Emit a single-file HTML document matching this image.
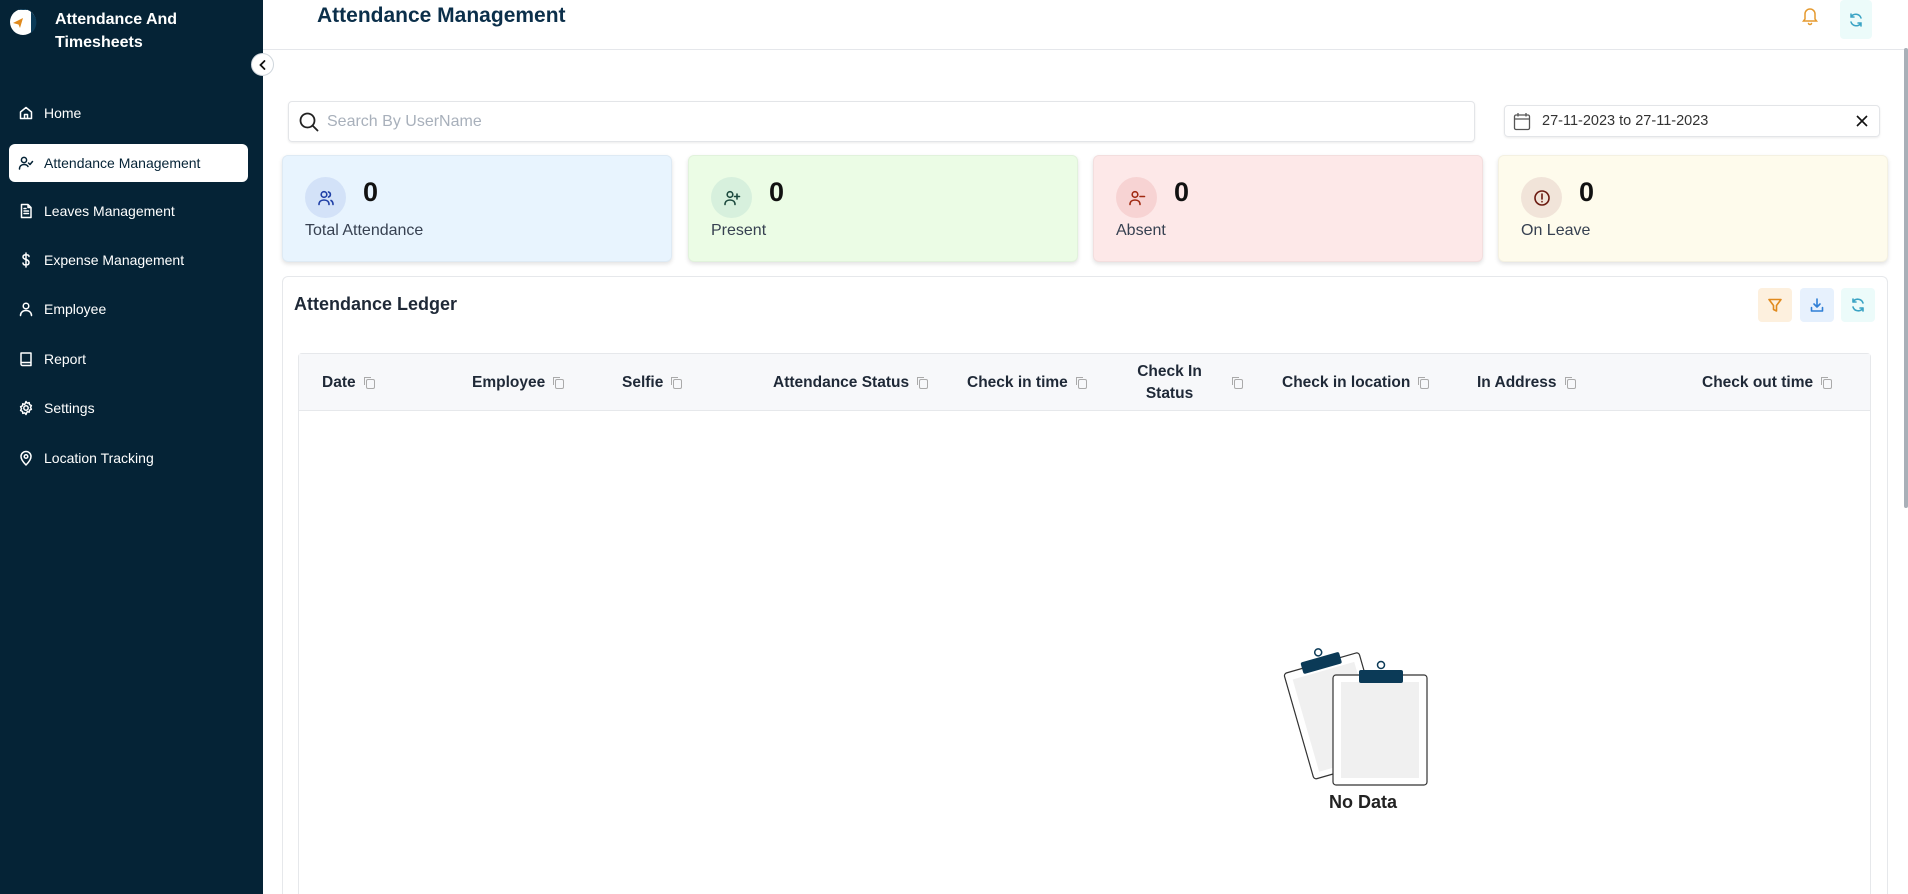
<!DOCTYPE html>
<html style="width:1908px;height:894px;overflow:hidden"><head><meta charset="utf-8">
<style>
*{box-sizing:border-box;margin:0;padding:0}
html,body{overflow:hidden}
body{width:1908px;height:894px;overflow:hidden;background:#fff;font-family:"Liberation Sans",sans-serif;position:relative;color:#1f2937}
.abs{position:absolute}
#side{left:0;top:0;width:263px;height:894px;background:#052336}
.nav{position:absolute;left:9px;width:239px;height:38px;color:#fff;font-size:14px;display:flex;align-items:center;padding-left:35px}
.nav svg{position:absolute;left:9px;top:11px;width:16px;height:16px;fill:none;stroke:#fff;stroke-width:1.5;stroke-linecap:round;stroke-linejoin:round}
.nav.act{background:#fff;color:#052336;border-radius:6px}
.nav.act svg{stroke:#052336}
.card{position:absolute;top:155px;height:107px;width:390px;border-radius:6px;box-shadow:0 2px 4px rgba(0,0,0,.12);border:1px solid rgba(0,0,0,.04)}
.card .ic{position:absolute;left:22px;top:21px;width:41px;height:41px;border-radius:50%;display:flex;align-items:center;justify-content:center}
.card .ic svg{width:18px;height:18px;fill:none;stroke-width:1.6;stroke-linecap:round;stroke-linejoin:round}
.card .n{position:absolute;left:80px;top:21px;font-size:27px;font-weight:600;color:#111}
.card .l{position:absolute;left:22px;top:66px;font-size:16px;color:#374151}
.th{position:absolute;top:0;height:57px;display:flex;align-items:center;font-size:15.5px;font-weight:700;color:#1f2937}
.cp{display:inline-block;width:9px;height:10px;border:1px solid #aaa;border-radius:2px;margin-left:10px;position:relative;top:1px}
.cp:after{content:"";position:absolute;left:-3px;top:-3px;width:6px;height:7px;border-left:1px solid #aaa;border-top:1px solid #aaa}
.btn{position:absolute;top:288px;width:34px;height:34px;border-radius:4px;display:flex;align-items:center;justify-content:center}
.btn svg{width:16px;height:16px;fill:none;stroke-width:1.6;stroke-linecap:round;stroke-linejoin:round}
</style></head><body>
<div id="side" class="abs">
  <svg class="abs" style="left:9px;top:6px" width="28" height="32" viewBox="0 0 28 32">
    <circle cx="14" cy="16" r="13" fill="#fff"/>
    <path d="M9 4 H20 a2 2 0 0 1 2 2 V27 a13 13 0 0 0 3 -18 A13 13 0 0 0 9 4z" fill="#0b3a57"/>
    <path d="M4 17 l10 -5 l-3 10 l-1.5 -3.5z" fill="#e08a1e"/>
  </svg>
  <div class="abs" style="left:55px;top:8px;color:#fff;font-weight:700;font-size:16px;line-height:23px">Attendance And<br>Timesheets</div>
  <div class="nav" style="top:94px"><svg viewBox="0 0 16 16"><path d="M2.5 7 L8 2.5 L13.5 7 V13.5 H2.5Z M6.5 13.5 V9.5 H9.5 V13.5"/></svg>Home</div>
  <div class="nav act" style="top:144px"><svg viewBox="0 0 16 16"><circle cx="6" cy="5" r="2.6"/><path d="M1.5 14 c0-3 2-4.5 4.5-4.5 s3.5 1 4 2 M10.5 8 l1.5 1.5 l2.5-3"/></svg>Attendance Management</div>
  <div class="nav" style="top:192px"><svg viewBox="0 0 16 16"><path d="M3.5 1.5 H10 L13 4.5 V14.5 H3.5Z M10 1.5 V4.5 H13 M6 8 H10.5 M6 10.5 H10.5 M6 5.5 H8"/></svg>Leaves Management</div>
  <div class="nav" style="top:241px"><svg viewBox="0 0 16 16"><path d="M8 1 V15 M11 4.5 C11 3.2 9.8 2.8 8 2.8 S5 3.5 5 5 S6.5 7 8 7.5 S11 8.5 11 10.5 S9.8 13 8 13 S5 12.5 5 11"/></svg>Expense Management</div>
  <div class="nav" style="top:290px"><svg viewBox="0 0 16 16"><circle cx="8" cy="5" r="2.8"/><path d="M2.5 14.5 c0-3.3 2.5-5 5.5-5 s5.5 1.7 5.5 5"/></svg>Employee</div>
  <div class="nav" style="top:340px"><svg viewBox="0 0 16 16"><path d="M3 2 H13 V14.5 H4.5 A1.5 1.5 0 0 1 3 13 Z M3 11.5 H13"/></svg>Report</div>
  <div class="nav" style="top:389px"><svg viewBox="0 0 16 16"><circle cx="8" cy="8" r="2.2"/><path d="M8 1.5 l1.2 1.7 2-.6 .3 2 1.9.9-.9 1.9 .9 1.9-1.9.9-.3 2-2-.6L8 14.5l-1.2-1.7-2 .6-.3-2-1.9-.9.9-1.9-.9-1.9 1.9-.9.3-2 2 .6z"/></svg>Settings</div>
  <div class="nav" style="top:439px"><svg viewBox="0 0 16 16"><path d="M8 15 C4 11 3 8.5 3 6.5 a5 5 0 0 1 10 0 C13 8.5 12 11 8 15Z"/><circle cx="8" cy="6.5" r="1.8"/></svg>Location Tracking</div>
</div>
<div class="abs" style="left:251px;top:53px;width:23px;height:23px;border-radius:50%;background:#fff;border:1px solid #cfd6dc;display:flex;align-items:center;justify-content:center">
  <svg width="12" height="12" viewBox="0 0 12 12"><path d="M7.5 2 L3.5 6 L7.5 10" stroke="#111" stroke-width="1.8" fill="none" stroke-linecap="round"/></svg>
</div>
<div class="abs" style="left:263px;top:0;width:1645px;height:50px;border-bottom:1px solid #e5e7eb"></div>
<div class="abs" style="left:317px;top:4px;font-size:21px;font-weight:600;color:#0b2f4a">Attendance Management</div>
<svg class="abs" style="left:1801px;top:6px" width="18" height="20" viewBox="0 0 18 20" fill="none" stroke="#e59a2f" stroke-width="1.5" stroke-linecap="round"><path d="M4 13 V8 a5 5 0 0 1 10 0 V13 L15.5 15 H2.5Z M7.5 17.5 a1.6 1.6 0 0 0 3 0"/></svg>
<div class="abs" style="left:1840px;top:0;width:32px;height:39px;background:#ecfbfa;border-radius:4px;display:flex;align-items:center;justify-content:center">
<svg width="16" height="16" viewBox="0 0 16 16" fill="none" stroke="#3aa3c4" stroke-width="1.5" stroke-linecap="round"><path d="M13 6 A5.5 5.5 0 0 0 3 5 M3 2 V5 H6 M3 10 A5.5 5.5 0 0 0 13 11 M13 14 V11 H10"/></svg></div>
<div class="abs" style="left:1904px;top:48px;width:4px;height:460px;background:#a9b0b8;border-radius:2px"></div>
<div class="abs" style="left:288px;top:101px;width:1187px;height:41px;border:1px solid #e3e5e8;border-radius:4px;box-shadow:0 1px 2px rgba(0,0,0,.08)">
  <svg class="abs" style="left:9px;top:9px" width="22" height="22" viewBox="0 0 22 22" fill="none" stroke="#222" stroke-width="1.8" stroke-linecap="round"><circle cx="9.5" cy="9.5" r="7"/><path d="M14.5 14.5 L19.5 19.5"/></svg>
  <div class="abs" style="left:38px;top:11px;font-size:16px;color:#a8b0bb">Search By UserName</div>
</div>
<div class="abs" style="left:1504px;top:105px;width:376px;height:32px;border:1px solid #e3e5e8;border-radius:4px;box-shadow:0 1px 2px rgba(0,0,0,.08)">
  <svg class="abs" style="left:8px;top:6px" width="18" height="19" viewBox="0 0 18 19" fill="none" stroke="#555" stroke-width="1.3"><rect x="1.5" y="3" width="15" height="14.5" rx="1.5"/><path d="M1.5 7 H16.5 M5 1 V4.5 M13 1 V4.5"/></svg>
  <div class="abs" style="left:37px;top:7px;font-size:14.5px;color:#333">27-11-2023 to 27-11-2023</div>
  <svg class="abs" style="left:351px;top:9px" width="12" height="12" viewBox="0 0 12 12" stroke="#111" stroke-width="1.6"><path d="M1 1 L11 11 M11 1 L1 11"/></svg>
</div>
<div class="card" style="left:282px;background:#e8f4fe"><div class="ic" style="background:#d3e2f8"><svg viewBox="0 0 18 18" stroke="#1f3fa6"><circle cx="7" cy="5.5" r="2.8"/><path d="M2 15.5 c0-3 2.2-4.5 5-4.5 s5 1.5 5 4.5 M11.5 3 a2.6 2.6 0 0 1 0 5 M14 11.5 c1.3.7 2 2 2 4"/></svg></div><div class="n">0</div><div class="l">Total Attendance</div></div>
<div class="card" style="left:688px;background:#ebfce5"><div class="ic" style="background:#d7f0dd"><svg viewBox="0 0 18 18" stroke="#1c4a3e"><circle cx="7" cy="5.5" r="2.8"/><path d="M2 15.5 c0-3 2.2-4.5 5-4.5 s5 1.5 5 4.5 M14 5 V10 M11.5 7.5 H16.5"/></svg></div><div class="n">0</div><div class="l">Present</div></div>
<div class="card" style="left:1093px;background:#fde8e8"><div class="ic" style="background:#f7d3d3"><svg viewBox="0 0 18 18" stroke="#a02a12"><circle cx="7" cy="5.5" r="2.8"/><path d="M2 15.5 c0-3 2.2-4.5 5-4.5 s5 1.5 5 4.5 M12 7.5 H16.5"/></svg></div><div class="n">0</div><div class="l">Absent</div></div>
<div class="card" style="left:1498px;background:#fefbec"><div class="ic" style="background:#f1e4d9"><svg viewBox="0 0 18 18" stroke="#6b1a10"><circle cx="9" cy="9" r="7"/><path d="M9 5 V10 M9 12.5 V12.8"/></svg></div><div class="n">0</div><div class="l">On Leave</div></div>
<div class="abs" style="left:282px;top:276px;width:1606px;height:618px;border:1px solid #e6e8eb;border-bottom:none;border-radius:6px 6px 0 0"></div>
<div class="abs" style="left:294px;top:294px;font-size:18px;font-weight:700;color:#1f2937">Attendance Ledger</div>
<div class="btn" style="left:1758px;background:#fdf0de"><svg viewBox="0 0 16 16" stroke="#e08a1e"><path d="M2 2.5 H14 L9.5 8.5 V14 L6.5 12.5 V8.5Z"/></svg></div>
<div class="btn" style="left:1800px;background:#e7f1fd"><svg viewBox="0 0 16 16" stroke="#2f7fd6"><path d="M8 2 V10 M5 7 L8 10 L11 7 M2.5 10.5 V14 H13.5 V10.5"/></svg></div>
<div class="btn" style="left:1841px;background:#ecfbfa"><svg viewBox="0 0 16 16" stroke="#3aa3c4"><path d="M13 6 A5.5 5.5 0 0 0 3 5 M3 2 V5 H6 M3 10 A5.5 5.5 0 0 0 13 11 M13 14 V11 H10"/></svg></div>
<div class="abs" style="left:298px;top:353px;width:1573px;height:541px;border:1px solid #e6e8eb;border-bottom:none;border-radius:4px 4px 0 0">
  <div class="abs" style="left:0;top:0;width:1571px;height:57px;background:#f7f8fa;border-bottom:1px solid #e6e8eb"></div>
  <div class="th" style="left:23px">Date<span class="cp"></span></div>
  <div class="th" style="left:173px">Employee<span class="cp"></span></div>
  <div class="th" style="left:323px">Selfie<span class="cp"></span></div>
  <div class="th" style="left:474px">Attendance Status<span class="cp"></span></div>
  <div class="th" style="left:668px">Check in time<span class="cp"></span></div>
  <div class="th" style="left:812px;width:150px;justify-content:center;text-align:center;line-height:22px"><span style="display:inline-block;width:80px;text-align:center">Check In Status</span><span class="cp" style="margin-left:24px"></span></div>
  <div class="th" style="left:983px">Check in location<span class="cp"></span></div>
  <div class="th" style="left:1178px">In Address<span class="cp"></span></div>
  <div class="th" style="left:1403px">Check out time<span class="cp"></span></div>
</div>
<svg class="abs" style="left:1282px;top:640px" width="150" height="150" viewBox="0 0 150 150">
  <g transform="rotate(-16 50 75)">
    <rect x="15" y="22" width="78" height="110" rx="3" fill="#fff" stroke="#333" stroke-width="1.2"/>
    <rect x="22" y="30" width="64" height="96" fill="#f0f0f0"/>
    <rect x="34" y="16" width="40" height="12" rx="2" fill="#0b3a57"/>
    <circle cx="54" cy="11" r="3.5" fill="#fff" stroke="#0b3a57" stroke-width="1.5"/>
  </g>
  <rect x="51" y="35" width="94" height="110" rx="3" fill="#fff" stroke="#333" stroke-width="1.2"/>
  <rect x="59" y="42" width="78" height="96" fill="#f0f0f0"/>
  <rect x="77" y="30" width="44" height="13" rx="2" fill="#0b3a57"/>
  <circle cx="99" cy="25" r="3.5" fill="#fff" stroke="#0b3a57" stroke-width="1.5"/>
</svg>
<div class="abs" style="left:1313px;top:792px;width:100px;text-align:center;font-size:18px;font-weight:700;color:#222">No Data</div>
</body></html>
